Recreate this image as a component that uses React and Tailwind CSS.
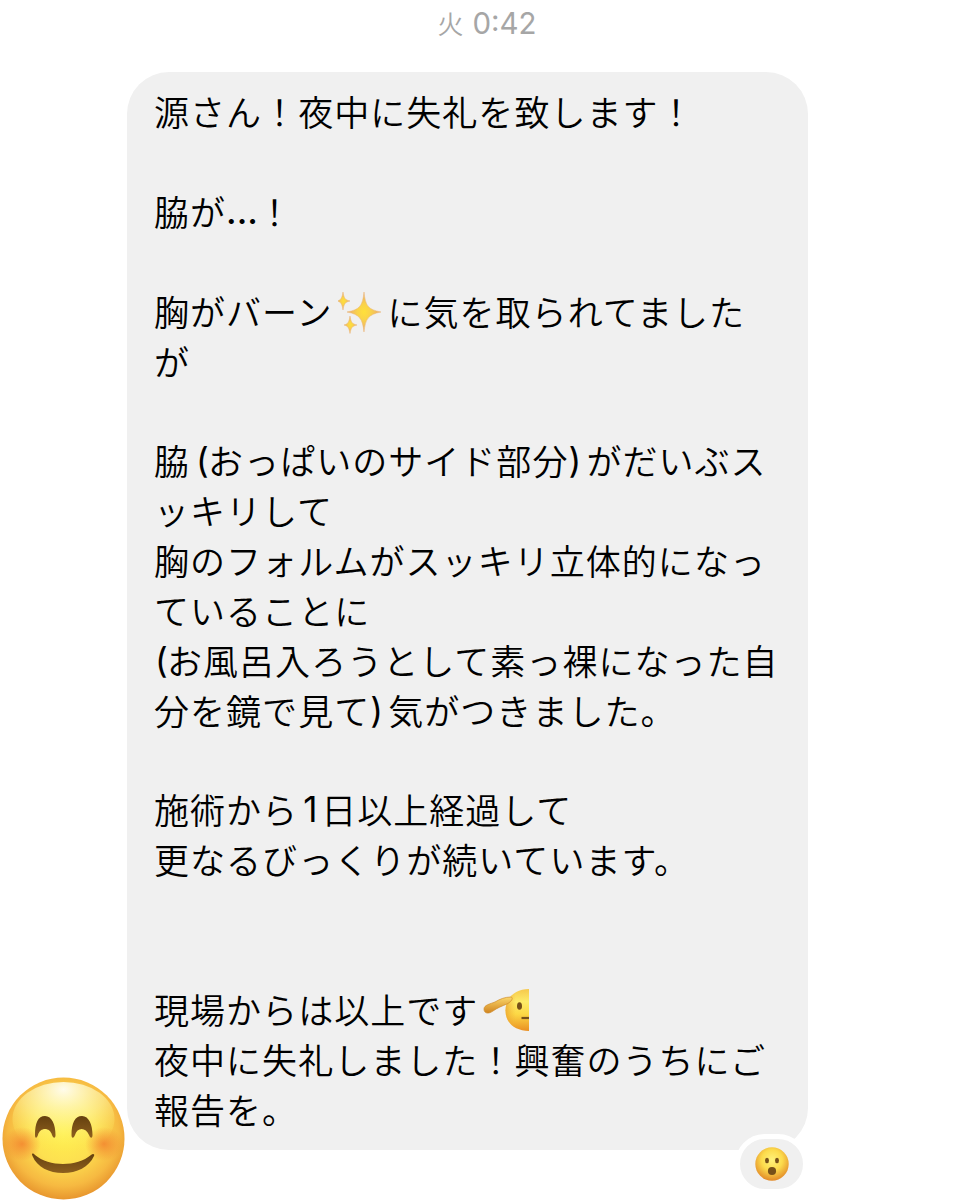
const ink = '#765019';

function Sparkles() {
  return (
    <svg className="ml-[6px] mr-[4px] mt-[4px] h-[43px] w-[45px] shrink-0" viewBox="0 0 45 43">
      <defs>
        <radialGradient id="spark">
          <stop offset="0" stopColor="#ffe03a" />
          <stop offset=".4" stopColor="#f9d24b" />
          <stop offset="1" stopColor="#e9a873" />
        </radialGradient>
      </defs>
      <g fill="url(#spark)" stroke="#eab573" strokeWidth=".5">
        <path d="M26 1C27.500 15 30 18.500 43 21C30 23.500 27.500 28 26 41C24.500 28 22 23.500 9 21C22 18.500 24.500 15 26 1Z" />
        <path d="M5 1C6 7 7 9 12 10C7 11 6 13 5 19C4 13 3 11 -1 10C3 9 4 7 5 1Z" />
        <path d="M12 25C13 31 14 33 19 34C14 35 13 37 12 42.500C11 37 10 35 6 34C10 33 11 31 12 25Z" />
      </g>
    </svg>
  );
}

function Salute() {
  return (
    <svg className="ml-[5px] mt-[3px] h-[44px] w-[46px] shrink-0" viewBox="0 0 46 44">
      <defs>
        <linearGradient id="sf" x1="0" y1="0" x2="0" y2="1">
          <stop stopColor="#f6c84c" />
          <stop offset=".3" stopColor="#fdeb68" />
          <stop offset=".6" stopColor="#fcd845" />
          <stop offset="1" stopColor="#ea8f22" />
        </linearGradient>
        <linearGradient id="sfEdge" x1="0" y1="0" x2="1" y2="0">
          <stop stopColor="#e99a2c" stopOpacity=".7" />
          <stop offset=".45" stopColor="#f3b33a" stopOpacity="0" />
        </linearGradient>
        <linearGradient id="arm" x1="0" y1="0" x2="0" y2="1">
          <stop stopColor="#fbd76a" />
          <stop offset="1" stopColor="#d08420" />
        </linearGradient>
      </defs>
      <path d="M46 1C32 1 22.500 10 22.500 22.500C22.500 35 32 43 46 43Z" fill="url(#sf)" />
      <path d="M46 1C32 1 22.500 10 22.500 22.500C22.500 35 32 43 46 43Z" fill="url(#sfEdge)" />
      <path d="M28 9C22 9 17 11 12 14C7 16 1 17 1 21C1 26 6 26 10 23C14 20 19 18 24 16C28 14 31 10 28 9Z" fill="url(#arm)" stroke="#cf8b2a" strokeWidth=".7" />
      <ellipse cx="36.500" cy="18" rx="2.500" ry="3.800" fill={ink} />
      <path d="M38.500 30H46" stroke={ink} strokeWidth="2.200" />
    </svg>
  );
}

function SmilingFace() {
  return (
    <svg className="h-[123px] w-[126px]" viewBox="0 0 126 123">
      <defs>
        <radialGradient id="face" cx=".5" cy=".44" r=".58">
          <stop stopColor="#fff14e" />
          <stop offset=".45" stopColor="#fde050" />
          <stop offset=".78" stopColor="#f6b941" />
          <stop offset="1" stopColor="#e58f2a" />
        </radialGradient>
        <radialGradient id="shine" cx=".5" cy=".1" r=".85">
          <stop stopColor="#fffef4" stopOpacity=".95" />
          <stop offset=".5" stopColor="#fff9a8" stopOpacity=".55" />
          <stop offset="1" stopColor="#fff14e" stopOpacity="0" />
        </radialGradient>
        <radialGradient id="cheek">
          <stop stopColor="#f27b2b" stopOpacity=".75" />
          <stop offset="1" stopColor="#f27b2b" stopOpacity="0" />
        </radialGradient>
        <linearGradient id="feature" x1="0" y1="0" x2="0" y2="1">
          <stop stopColor="#65400f" />
          <stop offset="1" stopColor="#8d5f1e" />
        </linearGradient>
      </defs>
      <circle cx="63.500" cy="61.500" r="61" fill="url(#face)" />
      <ellipse cx="63.500" cy="42" rx="51" ry="37" fill="url(#shine)" />
      <ellipse cx="22" cy="67" rx="19" ry="17" fill="url(#cheek)" />
      <ellipse cx="104" cy="67" rx="19" ry="17" fill="url(#cheek)" />
      <path d="M35 58C35 46 38 39 45 39C52 39 55.500 48 55.500 58C55.500 62 53 61 52 58C50 50 40 50 38 58C37 61 35 62 35 58Z" fill="url(#feature)" />
      <path d="M71.500 58C71.500 46 75 39 82 39C89 39 92.500 48 92.500 58C92.500 62 90 61 89 58C86 50 77 50 75 58C74 61 71.500 62 71.500 58Z" fill="url(#feature)" />
      <path d="M32.500 79C31 76 33 76 35 78C49 90 77 90 91 78C93 76 95 77 94 79C89 90 77 96 63 96C49 96 37 90 32.500 79Z" fill="url(#feature)" />
    </svg>
  );
}

function SurprisedFace() {
  return (
    <svg className="h-[34px] w-[34px]" viewBox="0 0 34 34">
      <defs>
        <radialGradient id="wow" cx=".5" cy=".38" r=".62">
          <stop stopColor="#fff27b" />
          <stop offset=".5" stopColor="#fcdb4c" />
          <stop offset="1" stopColor="#e28a28" />
        </radialGradient>
      </defs>
      <circle cx="17" cy="17" r="16.700" fill="url(#wow)" />
      <ellipse cx="12" cy="13.500" rx="2" ry="2.700" fill={ink} />
      <ellipse cx="22" cy="13.500" rx="2" ry="2.700" fill={ink} />
      <ellipse cx="17" cy="24" rx="4.100" ry="3.900" fill={ink} />
    </svg>
  );
}

const Open = ({ first }) => (
  <span className={first ? 'w-[13px] pl-px font-["Inter"] font-normal' : 'ml-[5px] w-[13px] pl-px font-["Inter"] font-normal'}>(</span>
);
const Close = () => <span className='mr-[5px] w-[13px] font-["Inter"] font-normal'>)</span>;

const lines = [
  '源さん！夜中に失礼を致します！',
  '',
  <><span>脇が</span><span className='w-[31px] font-["Inter"] font-medium tracking-normal'>...</span><span>！</span></>,
  '',
  <><span>胸がバーン</span><Sparkles /><span>に気を取られてました</span></>,
  'が',
  '',
  <><span>脇</span><Open /><span>おっぱいのサイド部分</span><Close /><span>がだいぶス</span></>,
  'ッキリして',
  '胸のフォルムがスッキリ立体的になっ',
  'ていることに',
  <><Open first /><span>お風呂入ろうとして素っ裸になった自</span></>,
  <><span>分を鏡で見て</span><Close /><span>気がつきました。</span></>,
  '',
  <><span>施術から</span><span className='ml-[5px] w-[18px] font-["Inter"] font-normal'>1</span><span>日以上経過して</span></>,
  '更なるびっくりが続いています。',
  '',
  '',
  <><span>現場からは以上です</span><Salute /></>,
  '夜中に失礼しました！興奮のうちにご',
  '報告を。',
];

export default function App() {
  return (
    <main lang="ja" className='flex h-[1200px] w-[974px] flex-col overflow-hidden bg-white font-["Noto_Sans_CJK_JP",sans-serif]'>
      <time className="flex h-[72px] justify-center gap-[9px] text-[28px] leading-[46px] text-[#a6a6a6]">
        <span className="text-[26px] font-[350]">火</span>
        <span className='font-["Inter"] text-[29.5px]'>0:42</span>
      </time>
      <div className="flex h-[1128px] items-start">
        <div className="flex h-full w-[127px] shrink-0 items-end"><SmilingFace /></div>
        <section className="relative h-[1078px] w-[681px] rounded-[42px] bg-[#f0f0f0] pl-[27px] pt-[14.5px] text-[35px] font-[350] tracking-[1.04px] text-black">
          {lines.map((line, i) => (
            <div key={i} className="flex h-[49.86px] items-center whitespace-pre leading-[50px]">{line}</div>
          ))}
          <div className="absolute left-[608px] top-[1062px] flex h-[60px] w-[73px] items-center justify-center rounded-full border-5 border-white bg-[#f0f0f0]">
            <SurprisedFace />
          </div>
        </section>
      </div>
    </main>
  );
}
